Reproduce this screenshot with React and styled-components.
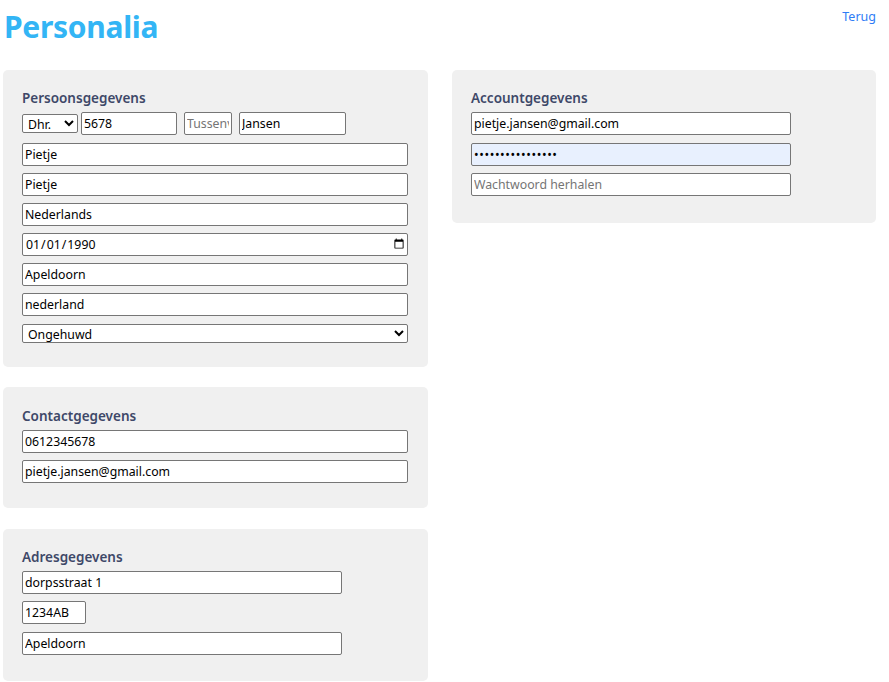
import React from "react";
import styled, { createGlobalStyle } from "styled-components";

const Global = createGlobalStyle`
  html, body { margin: 0; padding: 0; background: #fff; }
  body { font-family: "Noto Sans", "Open Sans", sans-serif; color: #212529; }
  * { box-sizing: border-box; }
`;

const Page = styled.div`
  padding: 0 13px 0 3px;
  width: 889px;
`;

const Header = styled.header`
  display: flex;
  justify-content: space-between;
  align-items: flex-start;
  height: 70px;
`;

const Title = styled.h1`
  margin: 6px 0 0 1px;
  font-size: 30px;
  font-weight: 700;
  color: #33b5f5;
  line-height: 42px;
  letter-spacing: -0.3px;
`;

const BackLink = styled.a`
  margin-top: 8px;
  font-size: 12.5px;
  color: #2f7cf6;
  text-decoration: none;
  line-height: 18px;
`;

const Columns = styled.div`
  display: grid;
  grid-template-columns: 425px 424px;
  column-gap: 24px;
  align-items: start;
`;

const Column = styled.div`
  display: flex;
  flex-direction: column;
  gap: 20px;
`;

const Panel = styled.section`
  background: #f0f0f0;
  border-radius: 5px;
  margin-top: ${(p) => p.$mt || 0}px;
  padding: ${(p) => p.$pt || 18}px 20px ${(p) => p.$pb || 26}px 19px;
`;

const PanelTitle = styled.h2`
  margin: 0 0 4px 0;
  font-size: 13.5px;
  font-weight: 600;
  line-height: 20px;
  color: #3e4868;
`;

const Fields = styled.div`
  display: flex;
  flex-direction: column;
  gap: 7px;
  align-items: flex-start;
`;

const Row = styled.div`
  display: flex;
  align-items: center;
  margin-bottom: 1px;
`;

const Input = styled.input`
  height: 23px;
  width: ${(p) => p.$w || 386}px;
  margin-left: ${(p) => p.$ml || 0}px;
  margin-bottom: ${(p) => p.$mb || 0}px;
  border: 1px solid #767676;
  border-radius: 2px;
  padding: 1px 2px;
  font-family: "Noto Sans", "Open Sans", sans-serif;
  font-size: 12.3px;
  color: #000;
  background: ${(p) => (p.$autofill ? "#e8f0fe" : "#fff")};
  letter-spacing: ${(p) => (p.$autofill ? "0.6px" : "normal")};
  outline: none;
  &::placeholder { color: #757575; letter-spacing: normal; }
  &::-webkit-calendar-picker-indicator {
    margin-right: -2px;
  }
`;

const Select = styled.select`
  height: 19px;
  width: ${(p) => p.$w || 386}px;
  margin-top: ${(p) => p.$mt || 0}px;
  border: 1px solid #767676;
  border-radius: 2px;
  padding: 0 0 0 1px;
  font-family: "Noto Sans", "Open Sans", sans-serif;
  font-size: 12.3px;
  color: #000;
  background: #fff;
`;

export default function App() {
  return (
    <>
      <Global />
      <Page>
        <Header>
          <Title>Personalia</Title>
          <BackLink href="#">Terug</BackLink>
        </Header>
        <Columns>
          <Column>
            <Panel $pb={24}>
              <PanelTitle>Persoonsgegevens</PanelTitle>
              <Fields>
                <Row>
                  <Select $w={56} defaultValue="Dhr.">
                    <option>Dhr.</option>
                    <option>Mevr.</option>
                  </Select>
                  <Input $w={96} $ml={3} defaultValue="5678" />
                  <Input $w={48} $ml={7} placeholder="Tussenvoegsel" />
                  <Input $w={107} $ml={7} defaultValue="Jansen" />
                </Row>
                <Input defaultValue="Pietje" />
                <Input defaultValue="Pietje" />
                <Input defaultValue="Nederlands" />
                <Input type="date" defaultValue="1990-01-01" />
                <Input defaultValue="Apeldoorn" />
                <Input defaultValue="nederland" />
                <Select $mt={1} defaultValue="Ongehuwd">
                  <option>Ongehuwd</option>
                  <option>Gehuwd</option>
                </Select>
              </Fields>
            </Panel>
            <Panel $pt={19} $pb={25}>
              <PanelTitle>Contactgegevens</PanelTitle>
              <Fields>
                <Input defaultValue="0612345678" />
                <Input defaultValue="pietje.jansen@gmail.com" />
              </Fields>
            </Panel>
            <Panel $mt={1} $pb={26}>
              <PanelTitle>Adresgegevens</PanelTitle>
              <Fields>
                <Input $w={320} defaultValue="dorpsstraat 1" />
                <Input $w={64} $mb={1} defaultValue="1234AB" />
                <Input $w={320} defaultValue="Apeldoorn" />
              </Fields>
            </Panel>
          </Column>
          <Column>
            <Panel $pb={27}>
              <PanelTitle>Accountgegevens</PanelTitle>
              <Fields>
                <Input $w={320} $mb={1} defaultValue="pietje.jansen@gmail.com" />
                <Input $w={320} type="password" $autofill defaultValue="wachtwoord123456" />
                <Input $w={320} type="password" placeholder="Wachtwoord herhalen" />
              </Fields>
            </Panel>
          </Column>
        </Columns>
      </Page>
    </>
  );
}
